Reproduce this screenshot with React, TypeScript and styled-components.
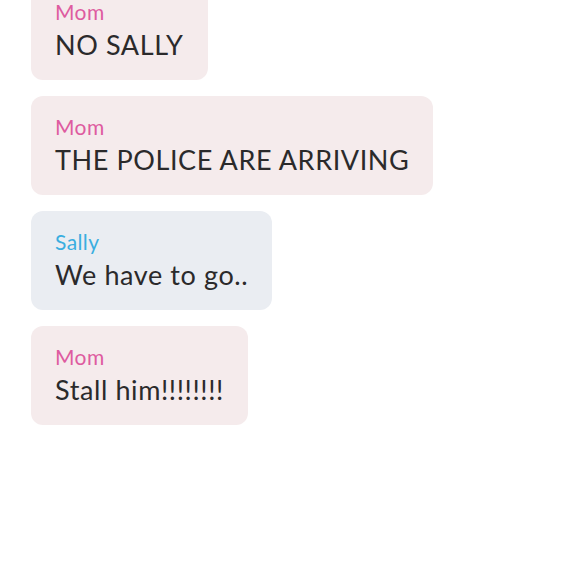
import React from "react";
import styled, { createGlobalStyle } from "styled-components";

const Global = createGlobalStyle`
  html, body { margin: 0; padding: 0; background: #ffffff; }
  body { font-family: "Lato", "Open Sans", sans-serif; }
`;

const Thread = styled.div`
  display: flex;
  flex-direction: column;
  align-items: flex-start;
  gap: 16px;
  padding: 0 0 0 31px;
  margin-top: -19px;
`;

const Bubble = styled.div<{ $tone: "mom" | "sally" }>`
  display: flex;
  flex-direction: column;
  gap: 2px;
  padding: 18px 24px 18px 24px;
  border-radius: 12px;
  background: ${(p) => (p.$tone === "mom" ? "#f5ebec" : "#eaedf2")};
`;

const Sender = styled.div<{ $tone: "mom" | "sally" }>`
  font-size: 21px;
  line-height: 26px;
  letter-spacing: 0.4px;
  color: ${(p) => (p.$tone === "mom" ? "#de5ba0" : "#3aaee0")};
`;

const Text = styled.div`
  font-size: 27px;
  line-height: 35px;
  letter-spacing: 0.6px;
  color: #2b2a2b;
  white-space: nowrap;
`;

const messages: { from: string; tone: "mom" | "sally"; text: string }[] = [
  { from: "Mom", tone: "mom", text: "NO SALLY" },
  { from: "Mom", tone: "mom", text: "THE POLICE ARE ARRIVING" },
  { from: "Sally", tone: "sally", text: "We have to go.." },
  { from: "Mom", tone: "mom", text: "Stall him!!!!!!!!" },
];

export default function App() {
  return (
    <>
      <Global />
      <Thread>
        {messages.map((m, i) => (
          <Bubble key={i} $tone={m.tone}>
            <Sender $tone={m.tone}>{m.from}</Sender>
            <Text>{m.text}</Text>
          </Bubble>
        ))}
      </Thread>
    </>
  );
}
